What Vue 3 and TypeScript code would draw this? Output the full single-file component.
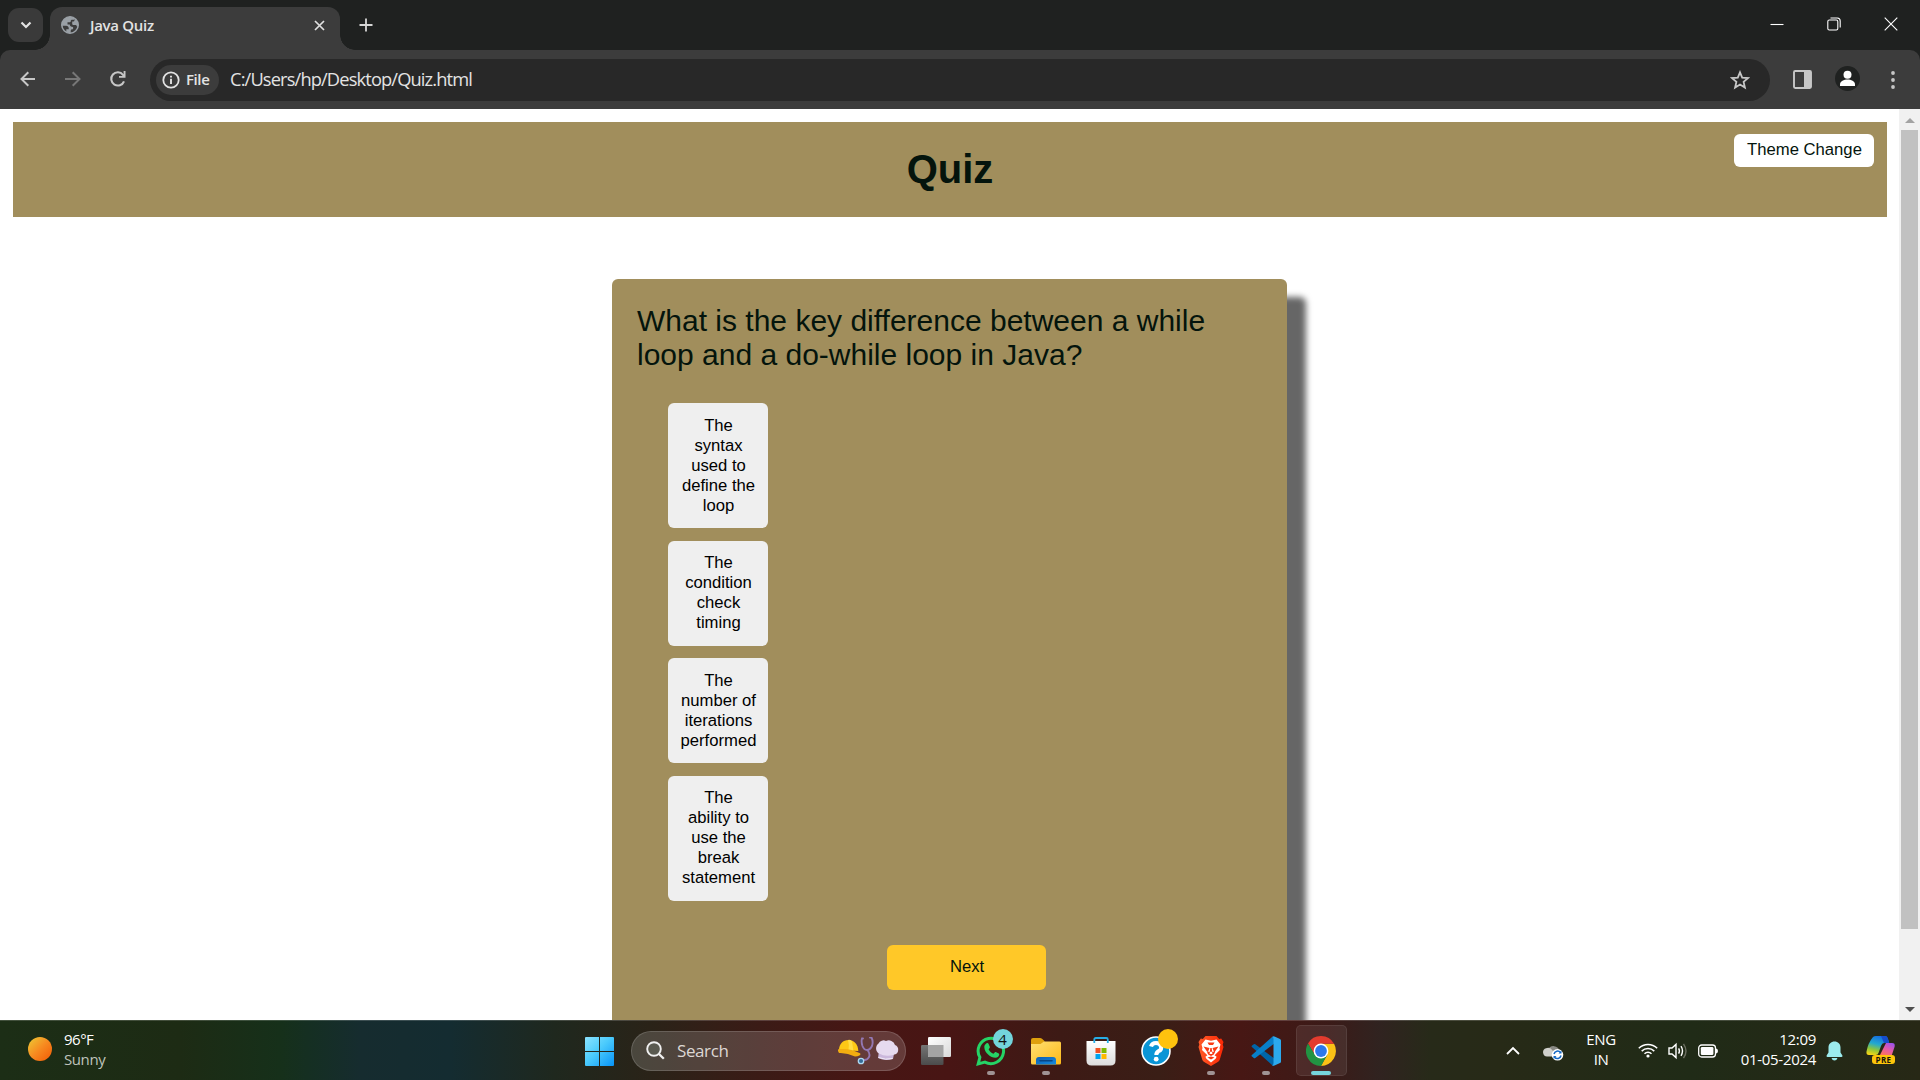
<script setup lang="ts">
interface Option {
  lines: string[]
}

const question: string = 'What is the key difference between a while loop and a do-while loop in Java?'

const options: Option[] = [
  { lines: ['The', 'syntax', 'used to', 'define the', 'loop'] },
  { lines: ['The', 'condition', 'check', 'timing'] },
  { lines: ['The', 'number of', 'iterations', 'performed'] },
  { lines: ['The', 'ability to', 'use the', 'break', 'statement'] },
]
</script>

<template>
  <div class="screen">
    <div class="tabstrip">
      <div class="tab-search">
        <svg width="12" height="8" viewBox="0 0 12 8"><path d="M1.5 1.5 6 6l4.500-4.500" fill="none" stroke="#e3e3e3" stroke-width="2.200" /></svg>
      </div>
      <div class="tab">
        <svg class="globe" width="18" height="18" viewBox="0 0 18 18">
          <circle cx="9" cy="9" r="8.200" fill="#3c3c3c" stroke="#9aa0a6" stroke-width="1.600" />
          <path d="M9 .8C4.500.8.8 4.500.8 9v.8h4.400c1.500 0 2.500 1 2.500 2.300v1.200H5.300v3c1.200.6 2.400.900 3.700.900h.7v-2.300c0-.9.700-1.600 1.600-1.600h.8v-2.400c-2.300 0-3.300-.6-3.300-2.300H6.500V6.200h2.400c.6 0 .8-.4.800-.9 0-1 .6-1.500 1.500-1.500h1.900V2C12 1.200 10.500.8 9 .8z" fill="#9aa0a6" />
          <path d="M13.500 2.200v1.700c0 1-.7 1.600-1.600 1.600h-.7v2.200c0 .8.600 1.300 1.600 1.300h1.800c.7 0 1 .5 1 1.200h1.600c.5-3.300-.7-6.300-3.700-8z" fill="#9aa0a6" />
        </svg>
        <span class="tab-title">Java Quiz</span>
        <svg class="tab-close" width="11" height="11" viewBox="0 0 11 11"><path d="M1 1l9 9M10 1l-9 9" stroke="#e0e0e0" stroke-width="1.700" /></svg>
      </div>
      <svg class="new-tab" width="14" height="14" viewBox="0 0 14 14"><path d="M7 .5v13M.5 7h13" stroke="#d6d6d6" stroke-width="1.800" /></svg>
      <div class="window-controls">
        <svg width="14" height="14" viewBox="0 0 14 14"><path d="M.5 7.500h13" stroke="#fff" stroke-width="1.100" /></svg>
        <svg width="14" height="14" viewBox="0 0 14 14" fill="none" stroke="#fff" stroke-width="1.100"><rect x=".8" y="3" width="10" height="10" rx="1.500" /><path d="M3.500 1h6.800A3 3 0 0 1 13.200 4v6.500" /></svg>
        <svg width="14" height="14" viewBox="0 0 14 14"><path d="M.7.7l12.600 12.600M13.300.7.7 13.300" stroke="#fff" stroke-width="1.100" /></svg>
      </div>
    </div>

    <div class="toolbar-back">
      <div class="toolbar">
        <svg class="nav-back" width="16" height="16" viewBox="0 0 16 16"><path d="M15 8H2M8.300 1.200 1.500 8l6.800 6.800" fill="none" stroke="#c7c7c7" stroke-width="2" /></svg>
        <svg class="nav-forward" width="16" height="16" viewBox="0 0 16 16"><path d="M0 8h14M7.700 1.200 14.500 8l-6.800 6.800" fill="none" stroke="#777" stroke-width="2" /></svg>
        <svg class="nav-reload" width="18" height="18" viewBox="0 0 18 18"><path d="M15 11.300A6.600 6.600 0 1 1 14 4.800L15.300 6.500" fill="none" stroke="#c7c7c7" stroke-width="2.100" /><path d="M16.500 1v6.700H10V5.900h4.600V1z" fill="#c7c7c7" /></svg>
        <div class="omnibox">
          <div class="file-chip">
            <svg width="18" height="18" viewBox="0 0 18 18"><circle cx="9" cy="9" r="7.700" fill="none" stroke="#e3e3e3" stroke-width="1.800" /><path d="M9 7.800v5.200M9 4.700v1.900" stroke="#e3e3e3" stroke-width="1.900" /></svg>
            <span>File</span>
          </div>
          <span class="url">C:/Users/hp/Desktop/Quiz.html</span>
          <svg class="star" width="20" height="20" viewBox="0 0 20 20"><path d="M10 2.300l2.200 5.300 5.800.5-4.400 3.800 1.300 5.600-4.900-3-4.900 3 1.300-5.600L2 8.100l5.800-.5z" fill="none" stroke="#c7c7c7" stroke-width="1.800" /></svg>
        </div>
        <svg class="side-panel" width="19" height="19" viewBox="0 0 19 19"><rect x="1" y="1" width="17" height="17" rx="1.200" fill="none" stroke="#c7c7c7" stroke-width="1.900" /><path d="M11 1h7v17h-7z" fill="#c7c7c7" /></svg>
        <svg class="avatar" width="25" height="25" viewBox="0 0 25 25"><circle cx="12.500" cy="12.500" r="12.500" fill="#1f2120" /><circle cx="12.500" cy="8.700" r="4" fill="#fff" /><path d="M5 20v-1.800C5 15 9 13.400 12.500 13.400S20 15 20 18.200V20z" fill="#fff" /></svg>
        <svg class="kebab" width="4" height="18" viewBox="0 0 4 18" fill="#c7c7c7"><circle cx="2" cy="2" r="1.900" /><circle cx="2" cy="9" r="1.900" /><circle cx="2" cy="16" r="1.900" /></svg>
      </div>
    </div>

    <div class="viewport">
      <main class="page">
        <header class="banner">
          <h1>Quiz</h1>
          <button class="theme">Theme Change</button>
        </header>
        <section class="card">
          <p class="question">{{ question }}</p>
          <div class="options">
            <button v-for="(option, i) in options" :key="i" class="option">
              <span v-for="line in option.lines" :key="line">{{ line }}</span>
            </button>
          </div>
          <button class="next">Next</button>
        </section>
      </main>
      <div class="scrollbar">
        <svg width="10" height="5" viewBox="0 0 10 5"><path d="M0 5 5 0l5 5z" fill="#a3a3a3" /></svg>
        <div class="thumb"></div>
        <svg class="down" width="10" height="5" viewBox="0 0 10 5"><path d="M0 0l5 5 5-5z" fill="#505050" /></svg>
      </div>
    </div>

    <footer class="taskbar">
      <div class="weather">
        <div class="sun"></div>
        <div class="weather-text"><span class="temp">96°F</span><span class="sky">Sunny</span></div>
      </div>

      <div class="apps">
        <svg class="start" width="29" height="29" viewBox="0 0 29 29">
          <defs><linearGradient id="win" x1="0" y1="0" x2="29" y2="29" gradientUnits="userSpaceOnUse"><stop offset="0" stop-color="#8be3ff" /><stop offset=".45" stop-color="#4ccbfc" /><stop offset="1" stop-color="#0794f8" /></linearGradient></defs>
          <path d="M1 0h13v14H0V1q0-1 1-1zM15 0h13q1 0 1 1v13H15zM0 15h14v14H1q-1 0-1-1zM15 15h14v13q0 1-1 1H15z" fill="url(#win)" />
        </svg>
        <div class="search">
          <svg width="19" height="19" viewBox="0 0 19 19"><circle cx="8" cy="8" r="6.800" fill="#5a5a50" stroke="#f0f0f0" stroke-width="1.900" /><path d="M13 13l4.800 4.800" stroke="#f0f0f0" stroke-width="2.300" /></svg>
          <span>Search</span>
          <svg class="art" width="61" height="28" viewBox="0 0 61 28">
            <path d="M1 13C1 7 5 3 10.500 3S20 7 20.300 14z" fill="#fdc816" />
            <path d="M10 3q3-.6 4 1.500l1.500 10-5-1Q11.500 8 10 3z" fill="#ffdd45" />
            <path d="M0 14q-.5-1.800 1.300-1.900Q12 11 22 16.300q1.200 1.300-.6 2.100-1.700.9-4.400 1.200Q9 15.500 1 16z" fill="#f2ad10" />
            <path d="M25 1.500h-1q-1 3 .500 7.500 1.500 4 4.500 4t5-4q1.500-4.500-.5-8.500h-1.500M29.500 13q3 4 1.500 7-1.500 3.500-6 3" fill="none" stroke="#9377b2" stroke-width="1.900" stroke-linecap="round" />
            <circle cx="23" cy="24" r="2.700" fill="#356c98" stroke="#add9f2" stroke-width="1.300" />
            <path d="M41 14l-1 7q7 3.200 15 1l1.600-8z" fill="#cbb8dc" />
            <path d="M41 16.500a6 6 0 0 1-.5-10A5.500 5.500 0 0 1 48 4a6.500 6.500 0 0 1 9 4 5 5 0 0 1-.5 9.500Q48 20.500 41 16.500z" fill="#e6daef" />
            <path d="M40.500 20.500q7 2.800 14 1" fill="none" stroke="#f4edf8" stroke-width="1" />
          </svg>
        </div>

        <div class="app">
          <svg width="30" height="30" viewBox="0 0 30 30">
            <defs><linearGradient id="tvb" x1="0" y1="0" x2="0" y2="1"><stop offset="0" stop-color="#757575" /><stop offset="1" stop-color="#4b4b4b" /></linearGradient><linearGradient id="tvf" x1="0" y1="0" x2="1" y2="1"><stop offset="0" stop-color="#fff" /><stop offset="1" stop-color="#d9d9d9" /></linearGradient></defs>
            <rect x="0" y="9" width="22.500" height="20" rx="1.300" fill="url(#tvb)" /><rect x="7" y="1" width="23" height="20" rx="1.300" fill="url(#tvf)" /><path d="M7 9h15.500v12H8q-1 0-1-1z" fill="#a4a4a4" />
          </svg>
        </div>
        <div class="app">
          <svg width="30" height="30" viewBox="0 0 30 30"><path d="M2.200 27.900l1.700-6.600a12.700 12.700 0 1 1 5 4.800z" fill="none" stroke="#25d366" stroke-width="3" /><path d="M10.300 7.500c.7-.7 1.800-.6 2.200.2l1.300 3c.3.700-.1 1.300-1.200 2.500 1 2 2.600 3.500 4.900 4.500 1.300-1.600 1.700-1.900 2.300-1.700l3 1.500c.8.500.4 2.200-.6 3.200-3.700 3.500-13.800-2.500-13.900-9.800 0-1.400.8-2.500 2-3.400z" fill="#25d366" /></svg>
          <span class="badge">4</span>
          <i class="dot"></i>
        </div>
        <div class="app">
          <svg width="30" height="30" viewBox="0 0 30 30">
            <defs><linearGradient id="fold" x1="0" y1="0" x2="1" y2="1"><stop offset="0" stop-color="#ffe073" /><stop offset="1" stop-color="#fcb918" /></linearGradient><linearGradient id="fb" x1="0" y1="0" x2="1" y2="1"><stop offset="0" stop-color="#0d5eb2" /><stop offset="1" stop-color="#168ce0" /></linearGradient></defs>
            <path d="M0 9V4q0-2 2-2h7q1.200 0 2 .8L13.500 5v4z" fill="#dfa00d" /><path d="M0 8h9.500l3.500-2.500h15.500q1.500 0 1.500 1.500v20q0 1.500-1.500 1.500h-27Q0 28.500 0 27z" fill="url(#fold)" /><path d="M5 28.500V24q0-3 3-3h14q3 0 3 3v4.500z" fill="url(#fb)" /><path d="M9 24.700h12" stroke="#074686" stroke-width="1.500" stroke-linecap="round" />
          </svg>
          <i class="dot"></i>
        </div>
        <div class="app">
          <svg width="30" height="30" viewBox="0 0 30 30">
            <defs><linearGradient id="store" x1="0" y1="0" x2="0" y2="1"><stop offset="0" stop-color="#fff" /><stop offset="1" stop-color="#dcdcdc" /></linearGradient></defs>
            <path d="M.5 5h29v19.500q0 5-5 5h-19q-5 0-5-5z" fill="url(#store)" /><path d="M8.300 7V3.500q0-1.500 1.500-1.500h10.500q1.500 0 1.500 1.500V7" fill="none" stroke="#27aee6" stroke-width="1.800" />
            <path d="M9.500 12h5v5h-5z" fill="#f25022" /><path d="M15.500 12h5v5h-5z" fill="#7fba00" /><path d="M9.500 18h5v5h-5z" fill="#00a4ef" /><path d="M15.500 18h5v5h-5z" fill="#ffb900" />
          </svg>
        </div>
        <div class="app">
          <svg width="30" height="30" viewBox="0 0 30 30"><circle cx="15" cy="15" r="14" fill="#0a95d6" stroke="#fff" stroke-width="1.600" /><path d="M10 10.500Q11 7 15 7t5 3.500-2.500 4.700Q15.300 16.500 15.300 19" fill="none" stroke="#fff" stroke-width="4" /><circle cx="15.200" cy="23.200" r="2.400" fill="#fff" /></svg>
          <span class="badge amber"></span>
        </div>
        <div class="app">
          <svg width="26" height="30" viewBox="0 0 26 30">
            <defs><linearGradient id="brave" x1="0" y1="0" x2="1" y2="0"><stop offset="0" stop-color="#ff5a28" /><stop offset="1" stop-color="#fb2805" /></linearGradient></defs>
            <path d="M7.500 0h11l2.700 2.900 2-.4L25.500 6l-.8 2.500.8 2.500-3.700 12.500q-.5 1.500-2 2.500L13 30l-6.800-4q-1.500-1-2-2.500L.5 11l.8-2.500L.5 6l2.300-3.500 2 .4z" fill="url(#brave)" />
            <path d="M7.500 3.500 13 4.700l5.500-1.200 4 5-1 3.500.4 2-5.300 5.200 2 1.500-1 2L13 26.500l-4.600-3.800-1-2 2-1.500L4 14l.5-2-1-3.500z" fill="#fff" />
            <path d="M5.500 10.500l6 1.500-1.800 4.500zM20.500 10.500l-6 1.500 1.800 4.500zM9.500 6.500l1.500 2.500h4l1.500-2.500zM8.800 15.800l1.400 2.700L13 20l2.800-1.500 1.400-2.700M12.300 12h1.400l.7 6h-2.800zM9.500 21.500 13 20.400l3.500 1.100L13 23.500z" fill="#f93a14" />
          </svg>
          <i class="dot"></i>
        </div>
        <div class="app">
          <svg width="30" height="30" viewBox="0 0 30 30"><path d="M1 9.500l1.800-1.300q.8-.5 1.500 0L23 22.300v7.400q-1.500-.2-2.500-1.200L.9 11Q.1 10.200 1 9.500z" fill="#0065a9" /><path d="M1 20.500l1.800 1.400q.8.500 1.500 0L23 7.700V.3q-1.500.2-2.500 1.200L.9 19q-.8.800.1 1.500z" fill="#087fc9" /><path d="M20.500 28.500Q22.500 30 22.500 27V3Q22.500 0 20.500 1.500q1-1.500 3-1L29 3q1 .5 1 1.500v21q0 1-1 1.500l-5.500 2.600q-2 .6-3-1.100z" fill="#2ca9ed" /></svg>
          <i class="dot"></i>
        </div>
        <div class="app active">
          <svg width="30" height="30" viewBox="0 0 30 30"><path d="M15 7.800h13.100a15 15 0 0 1-13.100 22.200l6.300-11.400z" fill="#fbc116" /><path d="M15 7.800h13.100A15 15 0 0 0 2 7.500l6.700 11.200z" fill="#e33b2e" /><path d="M8.700 18.600 2 7.500A15 15 0 0 0 15 30l6.400-11.400z" fill="#229342" /><circle cx="15" cy="15" r="7.400" fill="#fff" /><circle cx="15" cy="15" r="5.900" fill="#2d78ea" /></svg>
          <i class="dot wide"></i>
        </div>
      </div>

      <div class="tray">
        <svg class="caret" width="14" height="9" viewBox="0 0 14 9"><path d="M1 8l6-6 6 6" fill="none" stroke="#fff" stroke-width="1.800" /></svg>
        <svg class="cloud" width="21" height="18" viewBox="0 0 21 18"><path d="M5 7a6 6 0 0 1 11.500 1v4H5z" fill="#8a8a84" /><path d="M4 13.500A4.200 4.200 0 0 1 3 5.300Q7 3.500 10 8l5 5.500z" fill="#cfcfcb" /><circle cx="14.500" cy="11.800" r="5.800" fill="#fff" /><path d="M11 11a3.700 3.700 0 0 1 6.500-1.500M18 12.500A3.700 3.700 0 0 1 11.500 14.200" fill="none" stroke="#1267c4" stroke-width="1.500" /><path d="M18.500 7.500v3h-3zM10.500 16v-3h3z" fill="#1267c4" /></svg>
        <div class="lang"><span>ENG</span><span>IN</span></div>
        <svg class="wifi" width="20" height="16" viewBox="0 0 20 16" fill="none" stroke="#fff" stroke-width="1.500"><path d="M.8 6.300a13 13 0 0 1 18.400 0M3.700 9.100a9 9 0 0 1 12.600 0M6.500 11.800a5 5 0 0 1 7 0" /><circle cx="10" cy="14" r="1.600" fill="#fff" stroke="none" /></svg>
        <svg class="volume" width="20" height="18" viewBox="0 0 20 18" fill="none" stroke="#fff" stroke-width="1.400"><path d="M1 6h3L8 2.400v13.200L4 12H1z" /><path d="M10.600 6.300q1.700 2.700 0 5.400M13 4.200q3 4.800 0 9.600" /><path d="M15.500 1.800q5 7.200 0 14.400" stroke="#6b6e60" /></svg>
        <svg class="battery" width="20" height="14" viewBox="0 0 20 14"><rect x=".7" y="1" width="16.800" height="12" rx="3" fill="none" stroke="#fff" stroke-width="1.300" /><rect x="2.800" y="3" width="12.600" height="8" rx="1.300" fill="#fff" /><path d="M18 4.500q2 .4 2 2.500t-2 2.500z" fill="#fff" /></svg>
        <div class="clock"><span>12:09</span><span class="date">01-05-2024</span></div>
        <svg class="bell" width="17" height="20" viewBox="0 0 17 20"><path d="M8.500.5C12 .5 14.500 3 14.500 6.500v5l1.900 3q.5 1.200-.8 1.500H1.400q-1.300-.3-.8-1.500l1.900-3v-5C2.500 3 5 .5 8.500.5zM5.500 17h6q-.8 2.500-3 2.500t-3-2.500z" fill="#9cebed" /></svg>
        <div class="copilot">
          <svg width="29" height="25" viewBox="0 0 29 25">
            <defs><linearGradient id="cpa" x1=".5" y1="0" x2=".2" y2="1"><stop offset="0" stop-color="#1670df" /><stop offset=".4" stop-color="#22a9cf" /><stop offset=".7" stop-color="#8cc63c" /><stop offset="1" stop-color="#f9d614" /></linearGradient><linearGradient id="cpb" x1=".8" y1="0" x2=".3" y2="1"><stop offset="0" stop-color="#9b52ed" /><stop offset=".5" stop-color="#e45ba8" /><stop offset="1" stop-color="#ff7657" /></linearGradient></defs>
            <path d="M7 1Q8 0 10 0h9q2 0 2.700 2l1.500 5H18q-2 0-3 3l-2.300 6.500Q12 19 9.500 19H3q-3 0-2.500-3.500Q2 7 7 1z" fill="url(#cpa)" /><path d="M15 0h4q2 0 2.700 2l1.500 5H18z" fill="#154ccc" />
            <path d="M20 7h6q3.500 0 2.500 4l-3 9H13.500z" fill="url(#cpb)" />
          </svg>
          <span class="pre">PRE</span>
        </div>
      </div>
    </footer>
  </div>
</template>

<style>
body {
  margin: 0;
  overflow: hidden;
}
</style>

<style scoped>
.screen {
  width: 1920px;
  height: 1080px;
  display: flex;
  flex-direction: column;
  overflow: hidden;
  background: #fff;
  font-family: "Open Sans", "Noto Sans", sans-serif;
}
svg {
  display: block;
  flex: none;
}
button {
  border: 0;
  margin: 0;
  font-family: "Liberation Sans", Arial, sans-serif;
  font-size: 16.667px;
}

/* browser chrome */
.tabstrip {
  height: 50px;
  flex: none;
  display: flex;
  background: #1f2120;
}
.tab-search {
  width: 35px;
  height: 34px;
  margin: 8px 7px 0 8px;
  border-radius: 11px;
  background: #3a3a3a;
  display: flex;
  align-items: center;
  justify-content: center;
}
.tab {
  position: relative;
  width: 290px;
  height: 43px;
  margin-top: 7px;
  border-radius: 12px 12px 0 0;
  background: #3c3c3c;
  display: flex;
  align-items: center;
}
.tab::before,
.tab::after {
  content: "";
  position: absolute;
  bottom: 0;
  width: 15px;
  height: 15px;
}
.tab::before {
  left: -15px;
  background: radial-gradient(circle at 0 0, transparent 14.5px, #3c3c3c 15px);
}
.tab::after {
  right: -15px;
  background: radial-gradient(circle at 100% 0, transparent 14.5px, #3c3c3c 15px);
}
.globe {
  margin: -7px 0 0 11px;
}
.tab-title {
  margin: -7px 0 0 11px;
  width: 213px;
  font-size: 15px;
  font-weight: 600;
  letter-spacing: -0.3px;
  color: #e3e3e3;
}
.tab-close {
  margin: -7px 0 0 11px;
}
.new-tab {
  margin: 18px 0 0 19px;
}
.window-controls {
  margin-left: auto;
  padding: 17px 22px 0 0;
  display: flex;
  gap: 43px;
}
.toolbar-back {
  height: 59px;
  flex: none;
  background: #1f2120;
}
.toolbar {
  height: 59px;
  border-radius: 10px 10px 0 0;
  background: #3c3c3c;
  display: flex;
  align-items: center;
}
.nav-back {
  margin: -2px 0 0 20px;
}
.nav-forward {
  margin: -2px 0 0 29px;
}
.nav-reload {
  margin: -2px 0 0 28px;
}
.omnibox {
  width: 1620px;
  height: 42px;
  margin-left: 23px;
  border-radius: 21px;
  background: #282828;
  display: flex;
  align-items: center;
}
.file-chip {
  width: 57px;
  height: 30px;
  margin-left: 6px;
  padding-left: 6px;
  border-radius: 15px;
  background: #3c3c3c;
  display: flex;
  align-items: center;
  gap: 6px;
  font-size: 15px;
  font-weight: 600;
  letter-spacing: -0.4px;
  color: #e3e3e3;
}
.file-chip span {
  margin-top: -2px;
}
.url {
  margin: -2px 0 0 11px;
  font-size: 18.3px;
  letter-spacing: -0.87px;
  color: #e3e3e3;
  white-space: nowrap;
}
.star {
  margin: 0 20px 0 auto;
}
.side-panel {
  margin-left: 23px;
}
.avatar {
  margin: -2px 0 0 23px;
}
.kebab {
  margin-left: 31px;
}

/* web page */
.viewport {
  height: 911px;
  flex: none;
  display: flex;
  overflow: hidden;
}
.page {
  width: 1899px;
  height: 911px;
  overflow: hidden;
  color: #04140c;
  font-family: "Liberation Sans", Arial, sans-serif;
}
.banner {
  position: relative;
  height: 95px;
  margin: 13px 12px 0 13px;
  background: #a18e5c;
}
h1 {
  margin: 0;
  padding-top: 24px;
  font-size: 40px;
  line-height: 46px;
  text-align: center;
}
.theme {
  position: absolute;
  top: 12px;
  right: 13px;
  width: 140px;
  height: 33px;
  padding: 0 0 2px 1px;
  border-radius: 6px;
  background: #fff;
  color: #04140c;
}
.card {
  width: 625px;
  height: 790px;
  margin: 62px 0 0 612px;
  padding: 25px;
  border-radius: 6px;
  background: #a18e5c;
  box-shadow: 18.75px 18.75px 6.25px rgba(0, 0, 0, 0.6);
}
.question {
  margin: 0;
  font-size: 30px;
  line-height: 34px;
}
.options {
  margin: 31px 0 0 31px;
  display: flex;
  flex-direction: column;
  gap: 12.5px;
}
.option {
  width: 100px;
  padding: 12.5px 0 12.5px 1px;
  border-radius: 6px;
  background: #efefef;
  color: #000;
  line-height: 20px;
  text-align: center;
}
.option span {
  display: block;
}
.next {
  display: block;
  width: 159px;
  height: 45px;
  margin: 44.5px 0 0 250px;
  padding: 0 0 2px 1px;
  border-radius: 6px;
  background: #ffc828;
  color: #04140c;
}
.scrollbar {
  width: 21px;
  height: 911px;
  background: #f1f1f1;
  display: flex;
  flex-direction: column;
  align-items: center;
  padding-top: 9px;
  box-sizing: border-box;
}
.thumb {
  width: 17px;
  height: 799px;
  margin-top: 7px;
  background: #c1c1c1;
}
.down {
  margin-top: 78px;
}

/* taskbar */
.taskbar {
  height: 60px;
  flex: none;
  box-sizing: border-box;
  border-top: 1px solid rgba(255, 255, 255, 0.17);
  display: flex;
  color: #fff;
  background: linear-gradient(90deg, #1c2e16 0, #1d2b14 180px, #16301a 280px, #152f22 308px, #162c2f 360px, #142c31 450px, #1f281e 555px, #2a2318 650px, #3b1b16 760px, #471614 860px, #481514 950px, #3d1a15 1060px, #3a1e16 1160px, #471714 1240px, #3b1b18 1330px, #302320 1380px, #272a19 1430px, #272a17 1500px, #202b17 1690px, #272816 1920px) 0 -1px;
}
.weather {
  width: 585px;
  flex: none;
  box-sizing: border-box;
  padding-left: 28px;
  display: flex;
}
.sun {
  width: 24px;
  height: 24px;
  margin-top: 16px;
  border-radius: 50%;
  background: linear-gradient(135deg, #eebf31 10%, #f78a20 50%, #f2630a 90%);
}
.weather-text {
  margin: 8px 0 0 12px;
  display: flex;
  flex-direction: column;
  font-size: 15px;
  line-height: 20px;
}
.temp {
  letter-spacing: -0.5px;
}
.sky {
  color: #bfc3bb;
  letter-spacing: -0.4px;
}
.apps {
  width: 766px;
  flex: none;
  display: flex;
  align-items: center;
}
.start {
  margin-top: 1px;
}
.search {
  width: 275px;
  height: 40px;
  flex: none;
  margin: 0 4.5px 0 17px;
  padding: 0 6px 0 14px;
  box-sizing: border-box;
  border: 1px solid rgba(255, 255, 255, 0.15);
  border-radius: 20px;
  background: rgba(255, 255, 255, 0.16);
  display: flex;
  align-items: center;
  font-size: 17px;
  letter-spacing: -0.4px;
  color: #ddd7d4;
}
.search span {
  margin: 0 0 1px 12px;
}
.art {
  margin: 1px 0 0 auto;
}
.app {
  position: relative;
  width: 51px;
  height: 51px;
  margin-right: 4px;
  display: flex;
  flex: none;
  align-items: center;
  justify-content: center;
  box-sizing: border-box;
}
.active {
  border: 1px solid rgba(255, 255, 255, 0.08);
  border-radius: 5px;
  background: rgba(255, 255, 255, 0.08);
}
.dot {
  position: absolute;
  left: 50%;
  bottom: 1px;
  width: 8px;
  height: 4px;
  margin-left: -4px;
  border-radius: 2px;
  background: #a09394;
}
.wide {
  bottom: 0;
  width: 20px;
  margin-left: -10px;
  background: #76d5dc;
}
.badge {
  position: absolute;
  left: 27px;
  top: 4px;
  width: 20px;
  height: 20px;
  border-radius: 50%;
  background: #73d4dc;
  color: #111;
  font-size: 15px;
  line-height: 20px;
  text-align: center;
}
.amber {
  background: #ffc20e;
}
.tray {
  flex: 1;
  display: flex;
  align-items: center;
  font-size: 15px;
  line-height: 20px;
}
.caret {
  margin-left: 155px;
}
.cloud {
  margin: 2px 0 0 23px;
}
.lang {
  width: 30px;
  margin: -3px 0 0 22px;
  display: flex;
  flex-direction: column;
  align-items: center;
  letter-spacing: -0.4px;
}
.wifi {
  margin: -2px 0 0 22px;
}
.volume {
  margin-left: 10px;
}
.battery {
  margin-left: 10px;
}
.clock {
  width: 98px;
  margin-top: -4px;
  display: flex;
  flex-direction: column;
  align-items: flex-end;
  letter-spacing: -0.3px;
}
.bell {
  margin-left: 10px;
}
.copilot {
  position: relative;
  width: 30px;
  height: 29px;
  margin-left: 23px;
}
.pre {
  position: absolute;
  left: 6px;
  top: 19px;
  width: 23px;
  height: 9px;
  border-radius: 3px;
  background: #fdc50a;
  color: #17150a;
  font-size: 8px;
  font-weight: 700;
  line-height: 9px;
  letter-spacing: 0.4px;
  text-align: center;
}
</style>
